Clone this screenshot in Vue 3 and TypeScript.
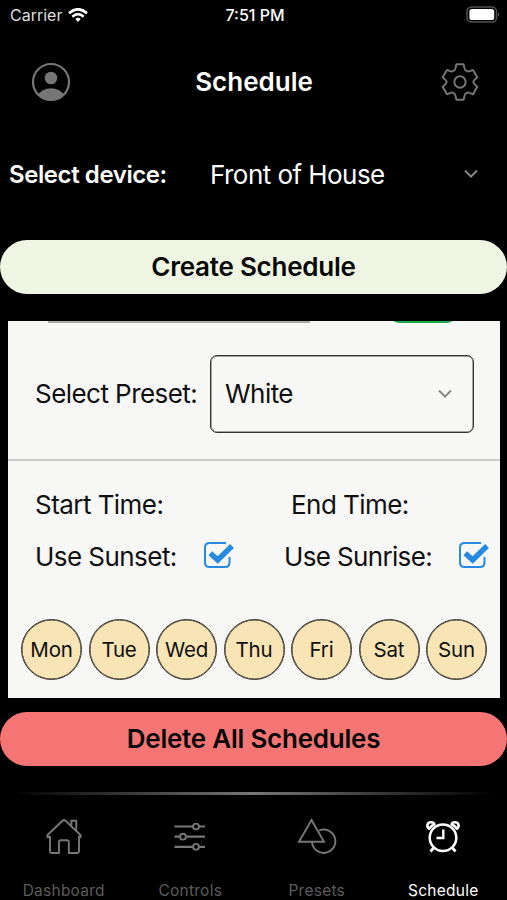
<script setup lang="ts">
import { ref } from 'vue'

interface Tab {
  id: string
  label: string
}

const device = ref<string>('Front of House')
const preset = ref<string>('White')
const activeTab = ref<string>('schedule')
const days: string[] = ['Mon', 'Tue', 'Wed', 'Thu', 'Fri', 'Sat', 'Sun']
const tabs: Tab[] = [
  { id: 'dashboard', label: 'Dashboard' },
  { id: 'controls', label: 'Controls' },
  { id: 'presets', label: 'Presets' },
  { id: 'schedule', label: 'Schedule' },
]
</script>

<template>
  <div class="screen">
    <div class="status">
      <div class="carrier">
        <span>Carrier</span>
        <svg width="20" height="15" viewBox="0 0 60 45" fill="none" stroke="#fff" stroke-width="8">
          <path d="M3 15.5Q30-8 57 15.5" />
          <path d="M13 26Q30 11 47 26" />
          <path d="M22 33Q30 26 38 33L30 42Z" fill="#fff" stroke="none" />
        </svg>
      </div>
      <span class="clock">7:51 PM</span>
      <svg class="battery" width="34" height="17" viewBox="0 0 34 17">
        <rect x="1" y="1" width="29.5" height="15" rx="4.5" fill="none" stroke="#505050" stroke-width="1.5" />
        <rect x="3.4" y="3" width="24.8" height="11" rx="2.6" fill="#fff" />
        <path d="M32 6.2Q34 8.5 32 10.8Z" fill="#666" />
      </svg>
    </div>

    <header class="header">
      <svg width="40" height="40" viewBox="-20 -20 40 40">
        <clipPath id="avatar"><circle r="18.6" /></clipPath>
        <circle r="18" fill="none" stroke="#767676" stroke-width="2.2" />
        <circle cy="-4" r="6.3" fill="#767676" />
        <path d="M-14 14Q-9 6.2 0 6.2T14 14V20H-14Z" fill="#767676" clip-path="url(#avatar)" />
      </svg>
      <h1>Schedule</h1>
      <svg width="40" height="40" viewBox="-60 -60 120 120" fill="none" stroke="#767676" stroke-width="6" stroke-linejoin="round">
        <path d="M-11-53H11Q14-36 17-35Q23-30 27-32L39-36L52-14Q40-4 40 0Q40 4 52 14L39 37L27 32Q23 30 17 35Q14 36 11 53H-11Q-14 36-17 35Q-23 30-27 32L-39 37L-52 14Q-40 4-40 0Q-40-4-52-14L-39-36L-27-32Q-23-30-17-35Q-14-36-11-53Z" />
        <circle r="17" />
      </svg>
    </header>

    <div class="device">
      <span class="device-label">Select device:</span>
      <span class="device-name">{{ device }}</span>
      <svg class="chevron" width="14" height="10" viewBox="0 0 14 10"><path d="M1 1.5L7 7.6L13 1.5" /></svg>
    </div>

    <button class="pill create">Create Schedule</button>

    <section class="card">
      <div class="edge">
        <span class="edge-line"></span>
        <span class="edge-switch"></span>
      </div>
      <div class="preset">
        <span class="preset-label">Select Preset:</span>
        <div class="select">
          <span>{{ preset }}</span>
          <svg class="chevron" width="14" height="10" viewBox="0 0 14 10"><path d="M1 1.5L7 7.6L13 1.5" /></svg>
        </div>
      </div>
      <div class="times">
        <span class="start">Start Time:</span>
        <span class="end">End Time:</span>
      </div>
      <div class="checks">
        <span class="sunset">Use Sunset:</span>
        <svg class="check" width="32" height="30" viewBox="0 0 32 30">
          <path d="M23 2H6.5Q2 2 2 6.5V21.5Q2 26 6.5 26H22Q26.5 26 26.5 21.5V16" stroke-width="2" />
          <path d="M7.3 12.3L14.7 19L29 5" stroke-width="5.4" />
        </svg>
        <span class="sunrise">Use Sunrise:</span>
        <svg class="check" width="32" height="30" viewBox="0 0 32 30">
          <path d="M23 2H6.5Q2 2 2 6.5V21.5Q2 26 6.5 26H22Q26.5 26 26.5 21.5V16" stroke-width="2" />
          <path d="M7.3 12.3L14.7 19L29 5" stroke-width="5.4" />
        </svg>
      </div>
      <div class="days">
        <span v-for="day in days" :key="day" class="day">{{ day }}</span>
      </div>
    </section>

    <button class="pill delete">Delete All Schedules</button>

    <div class="divider"></div>
    <nav class="tabs">
      <div v-for="tab in tabs" :key="tab.id" class="tab" :class="{ active: tab.id === activeTab }" @click="activeTab = tab.id">
        <svg width="42" height="42" viewBox="-21 -21 42 42" fill="none" stroke="currentColor" stroke-width="1.9" stroke-linejoin="round">
          <template v-if="tab.id === 'dashboard'">
            <path d="M-14-1V14.5Q-14 16 -12.5 16H-5V5Q-5 3.2-3.2 3.2H3Q4.8 3.2 4.8 5V16H13.5Q15 16 15 14.5V-1" />
            <path d="M-17.3-1.2L-1.5-16.2Q0-17.6 1.5-16.2L17.3-1.2M-17.3-1.2L-16 .4L-14-1M17.3-1.2L16 .4L14.5-1" />
            <path d="M7.3-11.5V-16.2H12.3V-6.5" />
          </template>
          <template v-else-if="tab.id === 'controls'">
            <path d="M-15.5-10.5H3M9-10.5H15M-15.5-.3H-10M-4-.3H15M-15.5 9.8H3M9 9.8H15" stroke-width="2.2" />
            <circle cx="6" cy="-10.5" r="2.9" /><circle cx="-7" cy="-.3" r="2.9" /><circle cx="6" cy="9.8" r="2.9" />
          </template>
          <template v-else-if="tab.id === 'presets'">
            <path d="M-5.5-17L-18 4.8H7Z" stroke-linejoin="miter" />
            <path d="M2-6.5A11.7 11.7 0 1 1-5 5" />
          </template>
          <template v-else>
            <circle cy=".7" r="13.3" stroke-width="2.5" />
            <path d="M.3-7.5V1H-6.5" stroke-width="2.4" stroke-linejoin="miter" />
            <path d="M-9.5 11L-12.5 14.5M9.5 11L12.5 14.5" stroke-width="2.7" />
            <path d="M-13.9-8.3C-17-10.6-15.6-14.8-12-14.8C-10-14.8-8.9-14-8.6-12.8Q-12-11.2-13.9-8.3ZM13.9-8.3C17-10.6 15.6-14.8 12-14.8C10-14.8 8.9-14 8.6-12.8Q12-11.2 13.9-8.3Z" stroke-width="2.6" />
          </template>
        </svg>
        <span>{{ tab.label }}</span>
      </div>
    </nav>
  </div>
</template>

<style>
body {
  margin: 0;
  background: #000;
}
</style>

<style scoped>
* {
  box-sizing: border-box;
}
.screen {
  width: 507px;
  height: 900px;
  overflow: hidden;
  display: flex;
  flex-direction: column;
  background: #000;
  color: #fff;
  font-family: Inter, "Liberation Sans", sans-serif;
  font-size: 26px;
  letter-spacing: -0.55px;
  white-space: nowrap;
}
svg {
  display: block;
  flex: none;
}
.status {
  flex: none;
  height: 30px;
  padding: 0 7px 0 10px;
  display: grid;
  grid-template-columns: 1fr auto 1fr;
  align-items: center;
  font-size: 16px;
  letter-spacing: 0;
}
.carrier {
  display: flex;
  align-items: center;
  gap: 6px;
  color: #ddd;
}
.clock {
  font-weight: 500;
}
.battery {
  justify-self: end;
  margin-top: -2px;
}
.header {
  flex: none;
  height: 104px;
  padding: 0 27px 0 31px;
  display: flex;
  align-items: center;
  justify-content: space-between;
}
h1 {
  margin: 0 3px 2px 0;
  font-size: 26px;
  font-weight: 600;
  letter-spacing: 0;
}
.device {
  flex: none;
  height: 82px;
  padding: 0 29px 2px 9px;
  display: flex;
  align-items: center;
}
.device-label {
  width: 201px;
  font-size: 24px;
  font-weight: 600;
  letter-spacing: -0.42px;
}
.device-name {
  flex: 1;
}
.chevron {
  fill: none;
  stroke: #888;
  stroke-width: 2;
}
.pill {
  flex: none;
  height: 54px;
  margin: 24px 0 0;
  padding: 0 0 2px;
  border: 0;
  border-radius: 27px;
  font: inherit;
  font-weight: 600;
  letter-spacing: -0.23px;
  color: #060606;
}
.create {
  background: #eef5e3;
}
.delete {
  margin-top: 14px;
  background: #f57575;
}
.card {
  flex: none;
  height: 377px;
  margin: 27px 7px 0 8px;
  background: #f7f7f6;
  color: #101010;
}
.edge {
  height: 2px;
  padding: 0 48px 0 40px;
  display: flex;
  justify-content: space-between;
}
.edge-line {
  width: 262px;
  height: 2px;
  background: #aaa;
}
.edge-switch {
  width: 58px;
  height: 2px;
  border-radius: 0 0 8px 8px / 0 0 2px 2px;
  background: #20a94a;
}
.preset {
  height: 138px;
  padding: 5px 26px 0 27px;
  display: flex;
  align-items: center;
  border-bottom: 2px solid #ccc;
}
.preset-label {
  width: 175px;
}
.select {
  flex: 1;
  height: 78px;
  padding: 0 21px 0 14px;
  display: flex;
  align-items: center;
  justify-content: space-between;
  border: 1.5px solid #333;
  border-radius: 7px;
  box-shadow: inset 0 0 0 0.5px #555;
}
.times {
  display: flex;
  height: 48px;
  margin-top: 19px;
  padding-left: 27px;
  align-items: center;
}
.start {
  width: 256px;
}
.checks {
  display: flex;
  height: 56px;
  padding-left: 27px;
  align-items: center;
}
.sunset {
  width: 168px;
}
.sunrise {
  width: 174px;
  margin-left: 49px;
  letter-spacing: -0.65px;
}
.check {
  fill: none;
  stroke: #258ae0;
}
.days {
  display: flex;
  justify-content: space-between;
  margin-top: 35px;
  padding: 0 13px;
}
.day {
  width: 61px;
  height: 61px;
  display: flex;
  align-items: center;
  justify-content: center;
  border: 1.5px solid #34322d;
  border-radius: 50%;
  box-shadow: inset 0 0 0 0.5px #34322d;
  background: #f9e4b5;
  font-size: 20.5px;
  letter-spacing: -0.2px;
}
.divider {
  flex: none;
  height: 3px;
  margin: 26px 13px 0;
  background: linear-gradient(90deg, #000, #777 50%, #000);
}
.tabs {
  flex: none;
  display: grid;
  grid-template-columns: repeat(4, 126.5px);
  margin: 21px 0 0 0.5px;
}
.tab {
  display: flex;
  flex-direction: column;
  align-items: center;
  gap: 23px;
  color: #777;
  font-size: 15.5px;
  line-height: 20px;
  letter-spacing: 0.25px;
}
.tab span {
  color: #5c5c5c;
}
.tab.active,
.tab.active span {
  color: #fff;
}
</style>
